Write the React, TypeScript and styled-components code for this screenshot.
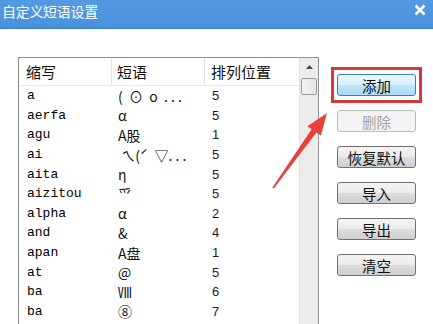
import React from "react";
import styled, { createGlobalStyle } from "styled-components";

interface Row {
  abbr: string;
  phrase: string;
  pos: string;
}

const rows: Row[] = [
  { abbr: "a", phrase: "(  ⊙  o  . . .", pos: "5" },
  { abbr: "aerfa", phrase: "α", pos: "5" },
  { abbr: "agu", phrase: "A股", pos: "1" },
  { abbr: "ai", phrase: " ㄟ(ˊ  ▽. . .", pos: "5" },
  { abbr: "aita", phrase: "η", pos: "5" },
  { abbr: "aizitou", phrase: "爫", pos: "5" },
  { abbr: "alpha", phrase: "α", pos: "2" },
  { abbr: "and", phrase: "&", pos: "4" },
  { abbr: "apan", phrase: "A盘", pos: "1" },
  { abbr: "at", phrase: "@", pos: "5" },
  { abbr: "ba", phrase: "Ⅷ", pos: "6" },
  { abbr: "ba", phrase: "⑧", pos: "7" },
];

const buttons = ["删除", "恢复默认", "导入", "导出", "清空"];

function App() {
  return (
    <Window>
      <GlobalStyle />
      <TitleBar>
        <Title>自定义短语设置</Title>
        <CloseIcon width="12" height="12" viewBox="0 0 12 12">
          <path d="M1.5 1.5 L10.5 10.5 M10.5 1.5 L1.5 10.5" stroke="#fff" strokeWidth="2.6" />
        </CloseIcon>
      </TitleBar>

      <Body>
        <ListBox>
          <Table>
            <HeaderRow>
              <HeadCell>缩写</HeadCell>
              <HeadCell>短语</HeadCell>
              <HeadCell $last>排列位置</HeadCell>
            </HeaderRow>
            {rows.map((r, i) => (
              <DataRow key={i}>
                <AbbrCell>{r.abbr}</AbbrCell>
                <PhraseCell>{r.phrase}</PhraseCell>
                <PosCell>{r.pos}</PosCell>
              </DataRow>
            ))}
          </Table>
          <ScrollBar>
            <ScrollArrow>
              <svg width="7" height="4" viewBox="0 0 7 4">
                <path d="M0 4 L3.5 0 L7 4 Z" fill="#4a4a4a" />
              </svg>
            </ScrollArrow>
            <ScrollThumb />
          </ScrollBar>
        </ListBox>

        <ButtonColumn>
          <Highlight>
            <Button $variant="primary">添加</Button>
          </Highlight>
          {buttons.map((b) => (
            <Button key={b} $variant={b === "删除" ? "disabled" : "normal"}>
              {b}
            </Button>
          ))}
        </ButtonColumn>
      </Body>

      <ArrowOverlay width="433" height="324" viewBox="0 0 433 324">
        <polygon
          points="272.4,187.6 311.6,129.2 307.4,126.2 327,113 320.9,135.6 316.4,132.6 273.8,188.6"
          fill="#e8403a"
        />
      </ArrowOverlay>
    </Window>
  );
}

export default App;

const GlobalStyle = createGlobalStyle`
  html, body {
    margin: 0;
    padding: 0;
    background: #fff;
    overflow: hidden;
  }
`;

const Window = styled.div`
  position: relative;
  width: 433px;
  height: 324px;
  overflow: hidden;
  background: #fff;
  font-family: "Noto Sans CJK SC", "Liberation Sans", sans-serif;
`;

const TitleBar = styled.div`
  height: 28px;
  background: linear-gradient(#549ae2, #4a91dc);
  border-bottom: 1px solid #3d7ec8;
  display: flex;
  align-items: center;
  justify-content: space-between;
  padding: 0 6px 0 2px;
`;

const Title = styled.span`
  color: #fff;
  font-size: 14px;
  letter-spacing: -0.3px;
  margin-top: -6px;
`;

const CloseIcon = styled.svg`
  margin-top: -8px;
  margin-right: 1px;
`;

const Body = styled.div`
  display: flex;
  gap: 18px;
  padding: 28px 0 0 18px;
`;

const ListBox = styled.div`
  width: 301px;
  height: 300px;
  box-sizing: border-box;
  border: 1px solid #8f9090;
  display: flex;
  flex-shrink: 0;
`;

const Table = styled.div`
  flex: 1;
  overflow: hidden;
`;

const HeaderRow = styled.div`
  display: grid;
  grid-template-columns: 93px 93px 1fr;
  height: 27px;
  border-bottom: 1px solid #eaeaea;
`;

const HeadCell = styled.div<{ $last?: boolean }>`
  display: flex;
  align-items: center;
  padding-left: ${(p) => (p.$last ? "6px" : "7px")};
  font-size: 15px;
  color: #111;
  border-right: ${(p) => (p.$last ? "none" : "1px solid #e2e2e2")};
  &:nth-child(2) {
    padding-left: 5px;
  }
`;

const DataRow = styled.div`
  display: grid;
  grid-template-columns: 93px 93px 1fr;
  height: 19.6px;
  align-items: center;
`;

const AbbrCell = styled.div`
  padding-left: 8px;
  font-family: "Liberation Mono", monospace;
  font-size: 13px;
  color: #000;
`;

const PhraseCell = styled.div`
  padding-left: 6px;
  font-family: "Noto Sans CJK SC", "DejaVu Sans", sans-serif;
  font-size: 14px;
  color: #111;
  white-space: pre;
  overflow: hidden;
`;

const PosCell = styled.div`
  padding-left: 7px;
  font-family: "Liberation Sans", sans-serif;
  font-size: 13px;
  color: #222;
`;

const ScrollBar = styled.div`
  width: 18px;
  background: #ececec;
  border-left: 1px solid #e0e0e0;
  display: flex;
  flex-direction: column;
  align-items: center;
  padding-top: 1px;
`;

const ScrollArrow = styled.div`
  width: 16px;
  height: 16px;
  display: flex;
  align-items: center;
  justify-content: center;
`;

const ScrollThumb = styled.div`
  width: 14px;
  height: 15px;
  margin-top: 3px;
  border: 1px solid #9a9a9a;
  border-radius: 2px;
  background: linear-gradient(90deg, #f4f4f4, #e2e2e2);
`;

const ButtonColumn = styled.div`
  display: flex;
  flex-direction: column;
  gap: 14px;
  margin-top: 17px;
  width: 79px;
`;

const Highlight = styled.div`
  position: relative;
  &::after {
    content: "";
    position: absolute;
    inset: -7px -6px -7px -6px;
    border: 3px solid #d8383b;
    pointer-events: none;
  }
`;

type Variant = "primary" | "normal" | "disabled";

const Button = styled.div<{ $variant: Variant }>`
  height: 22px;
  box-sizing: border-box;
  display: flex;
  align-items: center;
  justify-content: center;
  border-radius: 3px;
  font-size: 14.5px;
  border: 1px solid
    ${(p) =>
      p.$variant === "primary" ? "#3c7fb1" : p.$variant === "disabled" ? "#b8bcbf" : "#707070"};
  color: ${(p) => (p.$variant === "disabled" ? "#a3a3a3" : "#111")};
  background: ${(p) =>
    p.$variant === "primary"
      ? "linear-gradient(#eaf6fd 0%, #d9f0fc 50%, #bee6fd 51%, #a9daf5 100%)"
      : p.$variant === "disabled"
      ? "#f4f4f4"
      : "linear-gradient(#f4f4f4 0%, #ebebeb 50%, #dddddd 51%, #cfcfcf 100%)"};
`;

const ArrowOverlay = styled.svg`
  position: absolute;
  left: 0;
  top: 0;
  pointer-events: none;
`;
